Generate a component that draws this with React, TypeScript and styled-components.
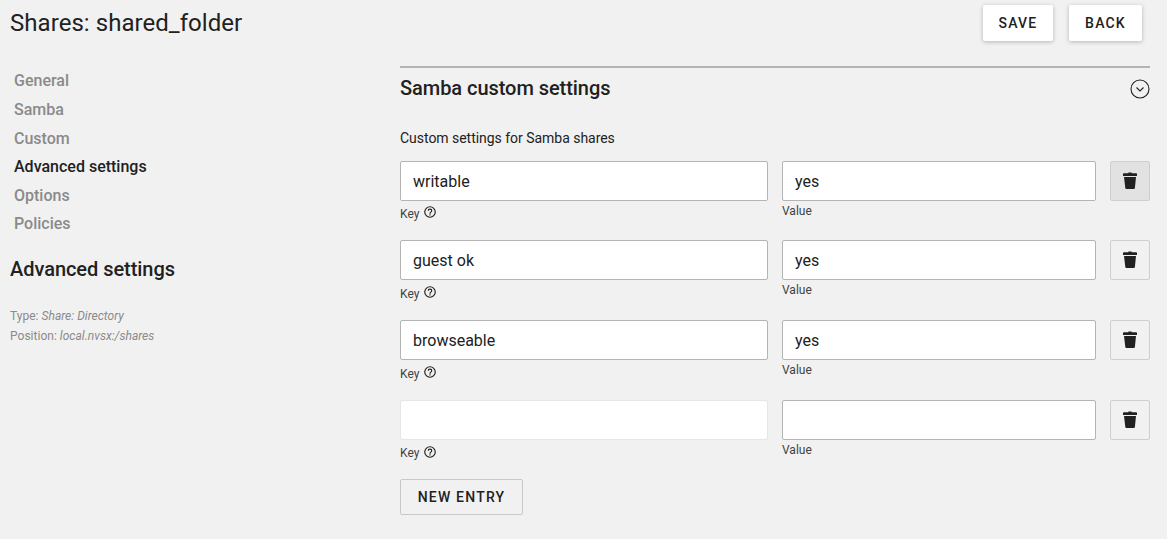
import React from "react";
import styled, { createGlobalStyle, css } from "styled-components";

const Global = createGlobalStyle`
  html, body { margin: 0; padding: 0; background: #f1f1f1; }
  body { font-family: Roboto, "Liberation Sans", sans-serif; color: #212121; }
`;

const Page = styled.div`
  width: 1167px;
  height: 539px;
  overflow: hidden;
  display: flex;
  flex-direction: column;
`;

const Header = styled.header`
  height: 46px;
  display: flex;
  align-items: flex-start;
  justify-content: space-between;
  padding: 5px 25px 0 10px;
  box-sizing: border-box;
`;

const Title = styled.h1`
  margin: 0;
  font-size: 24px;
  font-weight: 400;
  line-height: 36px;
  letter-spacing: 0.05px;
  color: #212121;
`;

const Actions = styled.div`
  display: flex;
  gap: 16px;
`;

const RaisedButton = styled.button<{ $width: number }>`
  width: ${(p) => p.$width}px;
  height: 36px;
  padding: 0;
  border: 0;
  border-radius: 2px;
  background: #fff;
  box-shadow: 0 1px 4px rgba(0, 0, 0, 0.25);
  font: 500 14px/36px Roboto, sans-serif;
  letter-spacing: 1.2px;
  color: #212121;
`;

const Body = styled.div`
  display: flex;
  flex: 1;
`;

const Sidebar = styled.aside`
  width: 400px;
  flex: none;
  padding: 21.4px 0 0 10px;
  box-sizing: border-box;
`;

const Nav = styled.nav`
  display: flex;
  flex-direction: column;
  padding-left: 4px;
`;

const NavItem = styled.a<{ $active?: boolean }>`
  font-size: 16px;
  font-weight: 500;
  line-height: 28.6px;
  color: ${(p) => (p.$active ? "#212121" : "#8a8a8a")};
`;

const SectionTitle = styled.h2`
  margin: 15px 0 0;
  font-size: 20px;
  font-weight: 500;
  line-height: 30px;
  letter-spacing: -0.05px;
  color: #212121;
`;

const Meta = styled.div`
  margin-top: 22px;
  font-size: 12px;
  line-height: 20px;
  letter-spacing: 0.02px;
  color: #8a8a8a;
  em { font-style: italic; }
`;

const Main = styled.main`
  width: 750px;
  flex: none;
`;

const PanelHead = styled.div`
  margin-top: 20px;
  height: 41px;
  border-top: 2px solid #b4b4b4;
  display: flex;
  align-items: center;
  justify-content: space-between;
`;

const PanelTitle = styled.h3`
  margin: -1px 0 0;
  font-size: 20px;
  font-weight: 500;
  line-height: 40px;
  letter-spacing: -0.05px;
  color: #212121;
`;

const Chevron = styled.svg`
  width: 20px;
  height: 20px;
  color: #212121;
`;

const Intro = styled.p`
  margin: 19px 0 12.8px;
  font-size: 14px;
  line-height: 20px;
  letter-spacing: -0.03px;
  color: #212121;
`;

const Rows = styled.div`
  display: flex;
  flex-direction: column;
`;

const Row = styled.div`
  display: grid;
  grid-template-columns: 368px 314px 40px;
  column-gap: 14px;
  height: 79.6px;
`;

const Field = styled.div`
  display: flex;
  flex-direction: column;
`;

const Input = styled.input<{ $soft?: boolean }>`
  box-sizing: border-box;
  flex: none;
  height: 40px;
  width: 100%;
  padding: 0.9px 12px 0;
  border: 1px solid ${(p) => (p.$soft ? "#e6e6e6" : "#b4b4b4")};
  border-radius: 2px;
  background: #fff;
  font: 400 16px Roboto, sans-serif;
  color: #212121;
  outline: none;
`;

const Hint = styled.div<{ $key?: boolean }>`
  display: flex;
  align-items: center;
  gap: 4px;
  margin-top: 1px;
  font-size: 12px;
  line-height: 18px;
  color: #424242;
  ${(p) =>
    p.$key &&
    css`
      margin-top: 4.6px;
      ${Row}:first-child & {
        margin-top: 4px;
      }
    `}
`;

const HelpIcon = styled.svg`
  width: 14px;
  height: 14px;
  margin-top: -3px;
  color: #212121;
`;

const TrashButton = styled.button<{ $hover?: boolean }>`
  box-sizing: border-box;
  width: 40px;
  height: 40px;
  padding: 0;
  border: 1px solid #cfcfcf;
  border-radius: 2px;
  background: ${(p) => (p.$hover ? "#e2e2e2" : "#f1f1f1")};
  display: flex;
  align-items: center;
  justify-content: center;
`;

const OutlineButton = styled.button`
  display: block;
  height: 36px;
  width: 123px;
  padding: 0;
  box-sizing: border-box;
  border: 1px solid #c8c8c8;
  border-radius: 2px;
  background: #f1f1f1;
  font: 500 14px Roboto, sans-serif;
  letter-spacing: 1.2px;
  color: #212121;
`;

const Trash = () => (
  <svg width="24" height="24" viewBox="0 0 24 24" fill="#212121">
    <path d="M10 4.3 L10.6 3.5 H13.4 L14 4.3 H18.2 Q19 4.3 19 5.1 V7 H5 V5.1 Q5 4.3 5.8 4.3 Z" />
    <path d="M6 8 H18 L16.9 19 Q16.8 20 15.8 20 H8.4 Q7.4 20 7.3 19 Z" />
  </svg>
);

const Help = () => (
  <HelpIcon viewBox="0 0 24 24" fill="currentColor">
    <path d="M12 2a10 10 0 1 0 0 20 10 10 0 0 0 0-20zm0 18a8 8 0 1 1 0-16 8 8 0 0 1 0 16z" />
    <path d="M11 16h2v2h-2zM12 6a4 4 0 0 0-4 4h2a2 2 0 1 1 4 0c0 2-3 1.75-3 5h2c0-2.25 3-2.5 3-5a4 4 0 0 0-4-4z" />
  </HelpIcon>
);

const rows = [
  { key: "writable", value: "yes" },
  { key: "guest ok", value: "yes" },
  { key: "browseable", value: "yes" },
  { key: "", value: "" },
];

const navItems = ["General", "Samba", "Custom", "Advanced settings", "Options", "Policies"];

export default function App() {
  return (
    <Page>
      <Global />
      <Header>
        <Title>Shares: shared_folder</Title>
        <Actions>
          <RaisedButton $width={70}>SAVE</RaisedButton>
          <RaisedButton $width={73}>BACK</RaisedButton>
        </Actions>
      </Header>
      <Body>
        <Sidebar>
          <Nav>
            {navItems.map((n) => (
              <NavItem key={n} $active={n === "Advanced settings"}>{n}</NavItem>
            ))}
          </Nav>
          <SectionTitle>Advanced settings</SectionTitle>
          <Meta>
            <div>Type: <em>Share: Directory</em></div>
            <div>Position: <em>local.nvsx:/shares</em></div>
          </Meta>
        </Sidebar>
        <Main>
          <PanelHead>
            <PanelTitle>Samba custom settings</PanelTitle>
            <Chevron viewBox="0 0 20 20" fill="none" stroke="currentColor">
              <circle cx="10" cy="10" r="9" strokeWidth="1.1" />
              <path d="M6.5 8.5 L10 12 L13.5 8.5" strokeWidth="1.1" />
            </Chevron>
          </PanelHead>
          <Intro>Custom settings for Samba shares</Intro>
          <Rows>
            {rows.map((r, i) => (
              <Row key={i}>
                <Field>
                  <Input defaultValue={r.key} $soft={i === 3} />
                  <Hint $key>Key <Help /></Hint>
                </Field>
                <Field>
                  <Input defaultValue={r.value} />
                  <Hint>Value</Hint>
                </Field>
                <TrashButton $hover={i === 0}><Trash /></TrashButton>
              </Row>
            ))}
          </Rows>
          <OutlineButton>NEW ENTRY</OutlineButton>
        </Main>
      </Body>
    </Page>
  );
}
